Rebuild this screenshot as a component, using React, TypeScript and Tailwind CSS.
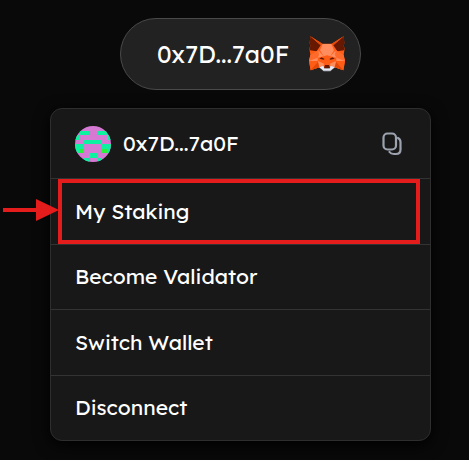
const ADDRESS = "0x7D...7a0F";

const AVATAR_TEAL: [number, number, number][] = [
  [1, 1, 2],
  [5, 1, 2],
  [0, 2, 1],
  [7, 2, 1],
  [2, 3, 4],
  [0, 4, 2],
  [6, 4, 2],
  [0, 5, 1],
  [7, 5, 1],
  [3, 6, 2],
  [2, 7, 1],
  [5, 7, 1],
];

function Avatar() {
  return (
    <svg
      viewBox="0 0 8 8"
      className="size-9 shrink-0 rounded-full bg-[#d579d3]"
      shapeRendering="crispEdges"
      aria-hidden="true"
    >
      {AVATAR_TEAL.map(([x, y, w]) => (
        <rect key={`${x}-${y}`} x={x} y={y} width={w} height="1" fill="#0cf2a0" />
      ))}
      <rect x="1" y="5" width="1" height="1" fill="#2bf238" />
      <rect x="6" y="5" width="1" height="1" fill="#2bf238" />
    </svg>
  );
}

function FoxHalf() {
  return (
    <>
      <path d="M4 1L40 23H54V104H44L31 94L5 103L0 75L4 57L1 37L4 30L2 21Z" fill="#ff5c16" />
      <path d="M4 1L35 28L23 46L3 43L1 37L4 30L2 21Z" fill="#661800" />
      <path d="M4 1L40 23L35 28Z" fill="#e34807" />
      <path d="M41 24H54V58L44 61L33 43Z" fill="#ff8d5d" />
      <path d="M29 44L5 62L0 75H26V65L44 61Z" fill="#ff8d5d" />
      <path d="M28 42L4 57L0 75L26 65L30 57Z" fill="#ff6a2a" />
      <path d="M0 75H27L31 94L5 103Z" fill="#ff5c16" />
      <path d="M27 77L31 94L5 103Z" fill="#e34807" />
      <path d="M27 75L45 83L43 94L31 94Z" fill="#ff8d5d" />
      <path d="M31 94L44 90L45 96H54V106H44Z" fill="#c0c4cd" />
      <path d="M31 94L43 90L45 97L54 99V102H43Z" fill="#e7ebf6" />
      <path d="M31 68L38 64L47 69L44 71Z" fill="#661800" />
      <path d="M48 61L54 59V87H49L46 77Z" fill="#ff5c16" />
      <path d="M48 87H54V97H45Z" fill="#661800" />
    </>
  );
}

function FoxLogo() {
  return (
    <svg viewBox="0 0 108 108" className="size-9 shrink-0" aria-hidden="true">
      <FoxHalf />
      <g transform="matrix(-1 0 0 1 108 0)">
        <FoxHalf />
      </g>
    </svg>
  );
}

function CopyIcon() {
  return (
    <svg
      viewBox="0 0 20 24"
      className="h-6 w-5"
      fill="none"
      stroke="#9ca3af"
      strokeWidth="2.200"
      strokeLinecap="round"
      strokeLinejoin="round"
      aria-hidden="true"
    >
      <rect x="1.500" y="1.500" width="12.500" height="16" rx="4" />
      <path d="M16 6C17.500 6.800 18.500 8 18.500 10V17.500C18.500 20.500 17 22 14 22H12C10 22 8.500 21.500 7.500 20" />
    </svg>
  );
}

function Pointer() {
  return (
    <svg
      viewBox="0 0 56 24"
      className="absolute top-1/2 right-full mr-[3px] h-6 w-14 -translate-y-1/2"
      fill="#e51c1c"
      aria-hidden="true"
    >
      <path d="M0 9H33V0L56 11L33 22V13H0Z" />
    </svg>
  );
}

const ITEMS = ["My Staking", "Become Validator", "Switch Wallet", "Disconnect"];

export default function App() {
  return (
    <main className="flex min-h-screen flex-col items-center bg-[#090909] pt-[18px] pr-[38px] pb-[19px] pl-[50px] font-['Lexend','Inter','Liberation_Sans',sans-serif] text-[21px] leading-7 text-white">
      <button
        type="button"
        className="flex h-[72px] items-center gap-5 rounded-full border border-[#4a4a4a] bg-[#222] pr-[15px] pl-9 text-2xl"
      >
        <span>{ADDRESS}</span>
        <FoxLogo />
      </button>

      <section
        aria-label="Wallet menu"
        className="mt-[18px] w-full rounded-xl border border-[#2e2e2e] bg-[#181818] shadow-[0_4px_16px_#000]"
      >
        <header className="flex h-[69px] items-center gap-3 px-6">
          <Avatar />
          <span className="flex-1 pb-0.5">{ADDRESS}</span>
          <button type="button" aria-label="Copy address" className="mr-1">
            <CopyIcon />
          </button>
        </header>
        <ul className="grid h-[262px] auto-rows-fr">
          {ITEMS.map((item, index) => (
            <li key={item} className="relative border-t border-[#333]">
              <button type="button" className="size-full px-6 pb-px text-left">
                {item}
              </button>
              {index === 0 && (
                <div className="pointer-events-none absolute inset-y-0 right-2.5 left-[7px] border-4 border-[#e51c1c]">
                  <Pointer />
                </div>
              )}
            </li>
          ))}
        </ul>
      </section>
    </main>
  );
}
